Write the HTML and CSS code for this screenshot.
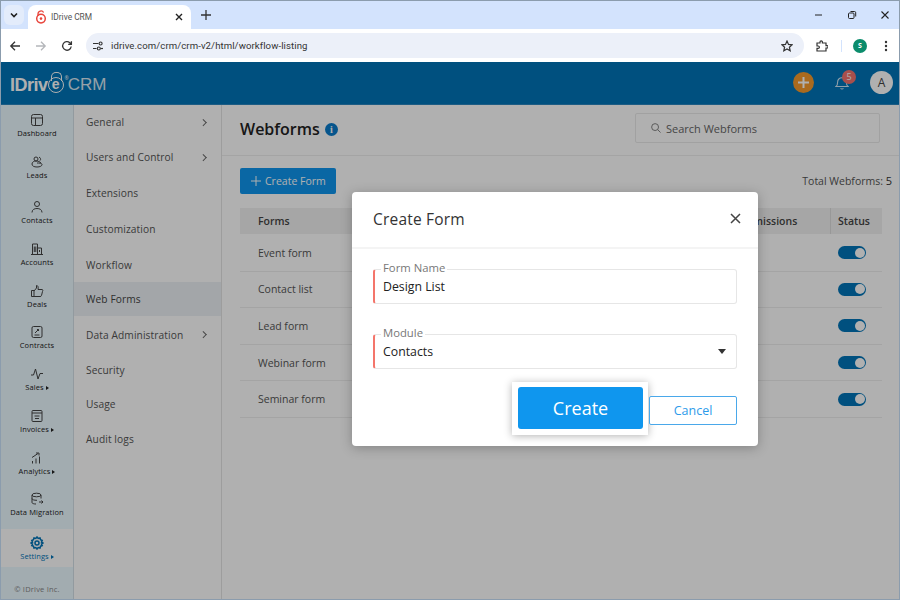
FILE: index.html
```html
<!DOCTYPE html>
<html lang="en">
<head>
    <meta charset="UTF-8">
    <meta name="viewport" content="width=device-width, initial-scale=1.0">
    <title>IDrive CRM</title>
    <link rel="stylesheet" href="styles.css">
</head>
<body>
    <div class="window">
        <!-- Browser chrome -->
        <div class="tabstrip">
            <button class="tab-list"><svg width="10" height="10" viewBox="0 0 10 10"><path d="M2 3.5 5 6.5 8 3.5" fill="none" stroke="#1f1f1f" stroke-width="1.6"/></svg></button>
            <div class="tab">
                <svg class="favicon" width="12" height="14" viewBox="0 0 12 14"><path d="M3 6V4a3 3 0 0 1 5.6-1.5" fill="none" stroke="#e8453c" stroke-width="1.3"/><circle cx="6" cy="8.6" r="4.3" fill="none" stroke="#e8453c" stroke-width="1.5"/><circle cx="6" cy="8.6" r="1.3" fill="#e8453c"/></svg>
                <span class="tab-title">IDrive CRM</span>
                <svg class="tab-close" width="8" height="8" viewBox="0 0 8 8"><path d="M1 1 7 7M7 1 1 7" stroke="#222" stroke-width="1.4"/></svg>
            </div>
            <svg class="new-tab" width="10" height="10" viewBox="0 0 10 10"><path d="M5 0V10M0 5H10" stroke="#333" stroke-width="1.3"/></svg>
            <div class="window-controls">
                <svg width="10" height="10" viewBox="0 0 10 10"><path d="M1 5H8" stroke="#222" stroke-width="1"/></svg>
                <svg width="10" height="10" viewBox="0 0 10 10"><rect x="1.5" y="3" width="5.5" height="5.5" rx="1" fill="none" stroke="#222"/><path d="M3.5 1.5H7.5A1.2 1.2 0 0 1 8.7 2.7V6.5" fill="none" stroke="#222"/></svg>
                <svg width="10" height="10" viewBox="0 0 10 10"><path d="M1.5 1.5 8.5 8.5M8.5 1.5 1.5 8.5" stroke="#222" stroke-width="1.1"/></svg>
            </div>
        </div>
        <div class="navbar">
            <div class="nav-buttons">
                <svg width="12" height="12" viewBox="0 0 12 12"><path d="M11 6H2M6 1.8 1.8 6 6 10.2" fill="none" stroke="#333" stroke-width="1.3"/></svg>
                <svg width="12" height="12" viewBox="0 0 12 12"><path d="M1 6H10M6 1.8 10.2 6 6 10.2" fill="none" stroke="#b4b6ba" stroke-width="1.3"/></svg>
                <svg width="12" height="12" viewBox="0 0 12 12"><path d="M10.2 6.5A4.3 4.3 0 1 1 8.8 2.7L10.4 4.2M10.4 1.2V4.4H7.2" fill="none" stroke="#333" stroke-width="1.3"/></svg>
            </div>
            <div class="omnibox">
                <span class="site-icon"><svg width="10" height="10" viewBox="0 0 10 10"><path d="M0 2.5H5.5M0 7.5H3.5" stroke="#333" stroke-width="1.2"/><circle cx="7.6" cy="2.5" r="1.5" fill="none" stroke="#333" stroke-width="1.1"/><circle cx="5.8" cy="7.5" r="1.5" fill="none" stroke="#333" stroke-width="1.1"/><path d="M7.5 7.5H10" stroke="#333" stroke-width="1.2"/></svg></span>
                <span class="url">idrive.com/crm/crm-v2/html/workflow-listing</span>
                <svg class="star" width="12" height="12" viewBox="0 0 12 12"><path d="M6 1 7.5 4.4 11.1 4.8 8.4 7.2 9.2 10.8 6 9 2.8 10.8 3.6 7.2.9 4.8 4.5 4.4Z" fill="none" stroke="#333" stroke-width="1.2"/></svg>
            </div>
            <svg class="puzzle" width="12" height="12" viewBox="0 0 12 12"><path d="M1 3H4V2a1.2 1.2 0 0 1 2.4 0V3H10V5.6H11a1.2 1.2 0 0 1 0 2.4H10V11H1V8.4H2.2a1.2 1.2 0 0 0 0-2.4H1Z" fill="none" stroke="#333" stroke-width="1.2"/></svg>
            <span class="nav-sep"></span>
            <span class="profile">S</span>
            <svg class="kebab" width="4" height="12" viewBox="0 0 4 12"><circle cx="2" cy="2" r="1.2" fill="#333"/><circle cx="2" cy="6" r="1.2" fill="#333"/><circle cx="2" cy="10" r="1.2" fill="#333"/></svg>
        </div>

        <!-- CRM app, dimmed by the modal overlay -->
        <div class="app">
            <header class="app-header">
                <div class="logo">
                    <span class="logo-name">IDriv</span><span class="logo-e">e</span><span class="logo-reg">®</span>
                    <span class="logo-crm">CRM</span>
                </div>
                <div class="header-actions">
                    <span class="add-btn"><svg width="13" height="13" viewBox="0 0 13 13"><path d="M6.5 1V12M1 6.5H12" stroke="#fff" stroke-width="2"/></svg></span>
                    <span class="bell">
                        <svg width="14" height="15" viewBox="0 0 14 15"><path d="M1 11.5C2.5 10.5 2.6 9 2.6 7.2 2.6 4.5 4.4 2.8 7 2.8S11.4 4.5 11.4 7.2C11.4 9 11.5 10.5 13 11.5ZM5.6 13.2A1.6 1.6 0 0 0 8.4 13.2" fill="none" stroke="#cfe6f5" stroke-width="1.1"/></svg>
                        <span class="bell-count">5</span>
                    </span>
                    <span class="user-avatar">A</span>
                </div>
            </header>
            <div class="app-body">
                <nav class="sidebar">
                    <a class="side-item"><svg viewBox="0 0 14 14"><rect x="1.5" y="1.5" width="11" height="11" rx="2"/><path d="M1.5 5H12.5M5.5 5V12.5"/></svg>Dashboard</a>
                    <a class="side-item"><svg viewBox="0 0 14 14"><circle cx="6" cy="4" r="2"/><path d="M9 2.2a2 2 0 0 1 1 3.4M2 9c0-2 2-3 4-3s4 .8 5 2M2 9c0 2 2 3 5 3s5-1 5-2.500-3-1.500-5-1.500"/></svg>Leads</a>
                    <a class="side-item side-item-gap"><svg viewBox="0 0 14 14"><circle cx="7" cy="4" r="2.500"/><path d="M2 12.500C2 9.500 4.500 8.500 7 8.500S12 9.500 12 12.500"/></svg>Contacts</a>
                    <a class="side-item"><svg viewBox="0 0 14 14"><path d="M1 12.500H13M2.500 12.500V2H7.500V12.500M7.500 6H11.500V12.500M4.300 4.500V10M5.800 4.500V10M9.500 8V10"/></svg>Accounts</a>
                    <a class="side-item"><svg viewBox="0 0 14 14"><path d="M1.500 6.500H4V12.500H1.500ZM4 7 6.500 4V1.500C8 1.500 8.500 3 8 5.500H12C13 5.500 13 6.500 12.500 7.500L11.500 11.500C11.300 12.300 10.800 12.500 10 12.500H4"/></svg>Deals</a>
                    <a class="side-item"><svg viewBox="0 0 14 14"><rect x="2" y="1.500" width="10" height="11" rx="1.500"/><path d="M4.500 10H9.500M5 8 8.500 4.500M7 4.500H8.500V6" /></svg>Contracts</a>
                    <a class="side-item"><svg viewBox="0 0 14 14"><path d="M1 8 3.500 8 5.500 2 8 12 10 6.500 13 6.500"/></svg><span>Sales<i class="caret"></i></span></a>
                    <a class="side-item"><svg viewBox="0 0 14 14"><rect x="2" y="1.500" width="10" height="11" rx="1"/><path d="M2 4H12M4.500 7H9.500M5 9.500H9"/></svg><span>Invoices<i class="caret"></i></span></a>
                    <a class="side-item"><svg viewBox="0 0 14 14"><path d="M2.500 12.500V10M6 12.500V7.500M9.500 12.500V5.500M2 6.500 8 2.500M6 2H9V4.500"/></svg><span>Analytics<i class="caret"></i></span></a>
                    <a class="side-item"><svg viewBox="0 0 14 14"><ellipse cx="6.500" cy="3" rx="4.500" ry="1.800"/><path d="M2 3V10.500C2 11.500 4 12 6 12M11 3V6.500M2 6.500C2 7.700 4 8.300 7 8.300M9 10H13M11.500 8.500 13 10 11.500 11.500"/></svg>Data Migration</a>
                    <a class="side-item side-item-active"><svg viewBox="0 0 14 14"><circle cx="7" cy="7" r="2"/><path d="M7 1 8.200 2.500 10 2 10.500 3.800 12.200 4.500 11.500 6.200 13 7 11.500 8 12.200 9.600 10.500 10.200 10 12 8.200 11.500 7 13 5.800 11.500 4 12 3.500 10.200 1.800 9.600 2.500 8 1 7 2.500 6.200 1.800 4.500 3.500 3.800 4 2 5.800 2.500Z"/></svg><span>Settings<i class="caret"></i></span></a>
                    <div class="copyright">© IDrive Inc.</div>
                </nav>
                <aside class="settings-menu">
                    <a class="menu-item menu-item-short">General<i class="chev"></i></a>
                    <a class="menu-item menu-item-tall">Users and Control<i class="chev"></i></a>
                    <a class="menu-item menu-item-tall">Extensions</a>
                    <a class="menu-item menu-item-tall">Customization</a>
                    <a class="menu-item">Workflow</a>
                    <a class="menu-item menu-item-active">Web Forms</a>
                    <a class="menu-item menu-item-data">Data Administration<i class="chev"></i></a>
                    <a class="menu-item menu-item-short">Security</a>
                    <a class="menu-item menu-item-short">Usage</a>
                    <a class="menu-item">Audit logs</a>
                </aside>
                <main class="content">
                    <div class="page-head">
                        <h1>Webforms</h1>
                        <span class="info-icon">i</span>
                        <div class="search">
                            <svg width="10" height="10" viewBox="0 0 11 11"><circle cx="4.500" cy="4.500" r="3.800" fill="none" stroke="#777" stroke-width="1"/><path d="M7.300 7.300 10.500 10.500" stroke="#777" stroke-width="1"/></svg>
                            <span>Search Webforms</span>
                        </div>
                    </div>
                    <div class="list-tools">
                        <button class="create-form-btn"><svg width="10" height="10" viewBox="0 0 10 10"><path d="M5 0V10M0 5H10" stroke="#fff" stroke-width="1"/></svg>Create Form</button>
                        <div class="total">Total Webforms: <b>5</b></div>
                    </div>
                    <div class="table">
                        <div class="table-row table-head">
                            <div class="cell-form">Forms</div>
                            <div class="cell-subs">Submissions</div>
                            <div class="cell-status">Status</div>
                        </div>
                        <div class="table-row">
                            <div class="cell-form">Event form</div><div class="cell-subs"></div>
                            <div class="cell-status"><span class="toggle"></span></div>
                        </div>
                        <div class="table-row">
                            <div class="cell-form">Contact list</div><div class="cell-subs"></div>
                            <div class="cell-status"><span class="toggle"></span></div>
                        </div>
                        <div class="table-row">
                            <div class="cell-form">Lead form</div><div class="cell-subs"></div>
                            <div class="cell-status"><span class="toggle"></span></div>
                        </div>
                        <div class="table-row">
                            <div class="cell-form">Webinar form</div><div class="cell-subs"></div>
                            <div class="cell-status"><span class="toggle"></span></div>
                        </div>
                        <div class="table-row">
                            <div class="cell-form">Seminar form</div><div class="cell-subs"></div>
                            <div class="cell-status"><span class="toggle"></span></div>
                        </div>
                    </div>
                </main>
            </div>

            <div class="overlay"></div>
            <div class="modal">
                <div class="modal-head">
                    <h2>Create Form</h2>
                    <svg width="11" height="11" viewBox="0 0 11 11"><path d="M1 1 10 10M10 1 1 10" stroke="#444" stroke-width="1.500"/></svg>
                </div>
                <div class="modal-body">
                    <div class="field">
                        <label>Form Name</label>
                        <span class="field-value">Design List</span>
                    </div>
                    <div class="field">
                        <label>Module</label>
                        <span class="field-value">Contacts</span>
                        <i class="select-arrow"></i>
                    </div>
                    <div class="modal-actions">
                        <div class="create-highlight"><button class="create-btn">Create</button></div>
                        <button class="cancel-btn">Cancel</button>
                    </div>
                </div>
            </div>
        </div>
    </div>
</body>
</html>
```

FILE: styles.css
```css
* {
    margin: 0;
    padding: 0;
    box-sizing: border-box;
}

body {
    font-family: 'Open Sans', sans-serif;
    background: #fff;
    overflow: hidden;
}

button {
    font-family: 'Open Sans', sans-serif;
    border: none;
}

.window {
    display: flex;
    flex-direction: column;
    width: 900px;
    height: 600px;
    border: 1px solid #8b9cad;
    overflow: hidden;
}

/* browser chrome */
.tabstrip {
    display: flex;
    align-items: flex-end;
    height: 28px;
    flex: none;
    background: #d3e3fd;
    padding-left: 3px;
}

.tab-list {
    display: flex;
    align-items: center;
    justify-content: center;
    width: 20px;
    height: 20px;
    margin-bottom: 4px;
    background: #e3ecfb;
    border-radius: 6px;
}

.tab {
    display: flex;
    align-items: center;
    width: 163px;
    height: 24px;
    margin-left: 4px;
    padding: 0 8px 0 7px;
    background: #fff;
    border-radius: 8px 8px 0 0;
}

.tab-title {
    flex: 1;
    margin-left: 4px;
    font-family: 'Roboto', sans-serif;
    font-size: 8.400px;
    color: #555;
}

.new-tab {
    margin: 0 0 9px 10px;
}

.window-controls {
    display: flex;
    gap: 23px;
    margin: 0 9px 9px auto;
}

.navbar {
    display: flex;
    align-items: center;
    height: 33px;
    flex: none;
    background: #fff;
}

.nav-buttons {
    display: flex;
    gap: 14px;
    margin-left: 8px;
}

.omnibox {
    display: flex;
    align-items: center;
    width: 718px;
    height: 25px;
    margin-left: 13px;
    padding-right: 11px;
    background: #ecf0f9;
    border-radius: 13px;
}

.site-icon {
    display: flex;
    margin-left: 7px;
}

.url {
    flex: 1;
    margin-left: 8px;
    font-family: 'Roboto', sans-serif;
    font-size: 9.600px;
    letter-spacing: 0.08px;
    color: #333;
}

.puzzle {
    margin-left: 12px;
}

.nav-sep {
    width: 1px;
    height: 12px;
    margin-left: 13px;
    background: #d3e3fd;
}

.profile {
    width: 14px;
    height: 14px;
    margin-left: 11px;
    border-radius: 50%;
    background: #0b8c6c;
    color: #fff;
    font-size: 7px;
    font-weight: 700;
    line-height: 14px;
    text-align: center;
}

.kebab {
    margin-left: 17px;
}

/* crm app */
.app {
    position: relative;
    flex: 1;
    display: flex;
    flex-direction: column;
    min-height: 0;
}

.app-header {
    display: flex;
    align-items: center;
    justify-content: space-between;
    height: 43px;
    flex: none;
    padding: 0 6px 1px 9px;
    background: #0074b8;
    border-bottom: 1px solid #2a86bf;
}

.logo {
    display: flex;
    align-items: center;
    padding-top: 5px;
    color: #fff;
}

.logo-name {
    font-family: 'Liberation Sans', sans-serif;
    font-size: 18px;
    font-weight: 700;
    letter-spacing: -0.5px;
}

.logo-e {
    position: relative;
    width: 16px;
    height: 16px;
    border: 1.500px solid #fff;
    border-radius: 50%;
    font-family: 'Liberation Sans', sans-serif;
    font-size: 14px;
    font-weight: 700;
    line-height: 12px;
    text-align: center;
}

.logo-e::before {
    content: "";
    position: absolute;
    top: -6px;
    left: 2px;
    width: 9px;
    height: 8px;
    border: 1.500px solid #fff;
    border-bottom: none;
    border-radius: 5px 5px 0 0;
}

.logo-reg {
    align-self: flex-start;
    font-size: 5px;
    margin-left: 1px;
}

.logo-crm {
    margin-left: -1px;
    font-family: 'Liberation Sans', sans-serif;
    font-size: 17px;
    opacity: 0.85;
}

.header-actions {
    display: flex;
    align-items: center;
}

.add-btn {
    display: flex;
    align-items: center;
    justify-content: center;
    width: 21px;
    height: 21px;
    border-radius: 50%;
    background: #f59a2c;
}

.bell {
    position: relative;
    display: flex;
    margin-left: 21px;
}

.bell-count {
    position: absolute;
    top: -5px;
    left: 7px;
    width: 14px;
    height: 14px;
    border-radius: 50%;
    background: #f4736e;
    color: #fff;
    font-size: 9px;
    line-height: 14px;
    text-align: center;
}

.user-avatar {
    width: 23px;
    height: 23px;
    margin-left: 21px;
    border-radius: 50%;
    background: #fff;
    color: #444;
    font-size: 12px;
    line-height: 23px;
    text-align: center;
}

.app-body {
    flex: 1;
    display: flex;
    min-height: 0;
}

.sidebar {
    display: flex;
    flex-direction: column;
    align-items: center;
    width: 73px;
    flex: none;
    padding-top: 8px;
    background: #ebf9ff;
    border-right: 1px solid #d4e0e6;
}

.side-item {
    display: flex;
    flex-direction: column;
    align-items: center;
    width: 100%;
    height: 41.700px;
    font-size: 7.500px;
    letter-spacing: 0.1px;
    color: #222;
    white-space: nowrap;
}

.side-item svg {
    width: 14px;
    height: 14px;
    margin-bottom: 1px;
    flex: none;
    fill: none;
    stroke: #444;
    stroke-width: 1;
}

.side-item-gap {
    margin-top: 4px;
}

.side-item-active {
    height: 38px;
    margin-top: -5px;
    padding-top: 7px;
    background: #fff;
    color: #0074b8;
}

.side-item-active svg {
    stroke: #0074b8;
    stroke-width: 1.500;
}

.caret {
    display: inline-block;
    margin-left: 2px;
    border-left: 3px solid currentColor;
    border-top: 2px solid transparent;
    border-bottom: 2px solid transparent;
}

.copyright {
    margin-top: auto;
    margin-bottom: 5px;
    font-size: 7.500px;
    color: #888;
    letter-spacing: 0.2px;
}

.settings-menu {
    display: flex;
    flex-direction: column;
    width: 148px;
    flex: none;
    background: #fff;
    border-right: 1px solid #e4e4e4;
}

.menu-item {
    display: flex;
    align-items: center;
    justify-content: space-between;
    height: 35px;
    padding: 0 16px 0 12px;
    font-size: 10.200px;
    letter-spacing: 0.1px;
    color: #555;
}

.menu-item-tall {
    height: 36px;
}

.menu-item-short {
    height: 34px;
}

.menu-item-data {
    height: 37px;
}

.menu-item-active {
    height: 34px;
    background: #ecf1f5;
    color: #444;
}

.chev {
    width: 4.500px;
    height: 4.500px;
    border-top: 1px solid #666;
    border-right: 1px solid #666;
    transform: rotate(45deg);
}

.content {
    flex: 1;
    min-width: 0;
    background: #fff;
}

.page-head {
    display: flex;
    align-items: center;
    height: 51px;
    padding: 0 19px 2px 18px;
    border-bottom: 1px solid #eee;
}

.page-head h1 {
    font-size: 16px;
    font-weight: 600;
    color: #222;
}

.info-icon {
    width: 13px;
    height: 13px;
    margin-left: 5px;
    border-radius: 50%;
    background: #0a7ccb;
    color: #fff;
    font-family: 'Liberation Serif', serif;
    font-size: 10px;
    font-weight: 700;
    line-height: 13px;
    text-align: center;
}

.search {
    display: flex;
    align-items: center;
    gap: 5px;
    width: 245px;
    height: 30px;
    margin: -2px 0 0 auto;
    padding-left: 15px;
    border: 1px solid #eaeaea;
    border-radius: 2px;
    font-size: 11px;
    color: #666;
}

.list-tools {
    display: flex;
    align-items: center;
    justify-content: space-between;
    height: 26px;
    margin: 12px 7px 14px 18px;
}

.create-form-btn {
    display: flex;
    align-items: center;
    gap: 4px;
    width: 96px;
    height: 26px;
    padding-left: 11px;
    background: #0f96ee;
    border-radius: 2px;
    color: #fff;
    font-size: 10.500px;
}

.total {
    margin-top: -2px;
    font-size: 10.500px;
    color: #555;
}

.total b {
    font-size: 11px;
    font-weight: 400;
    color: #333;
}

.table {
    width: 642px;
    margin-left: 18px;
}

.table-row {
    display: flex;
    align-items: center;
    height: 36.600px;
    border-bottom: 1px solid #eee;
    font-size: 10.500px;
    color: #555;
}

.table-head {
    height: 26px;
    margin-bottom: 1px;
    background: #f1f1f1;
    border-bottom: none;
    font-weight: 600;
    color: #444;
}

.cell-form {
    flex: 1;
    padding-left: 18px;
}

.cell-subs {
    width: 96px;
}

.cell-status {
    display: flex;
    align-items: center;
    width: 52px;
    height: 100%;
    padding-left: 8px;
}

.table-head .cell-status {
    height: 26px;
    padding-left: 7px;
    border-left: 1px solid #ddd;
}

.toggle {
    position: relative;
    width: 28px;
    height: 13px;
    border-radius: 7px;
    background: #0074b8;
}

.toggle::after {
    content: "";
    position: absolute;
    top: 1.500px;
    right: 1.500px;
    width: 10px;
    height: 10px;
    border-radius: 50%;
    background: #fff;
}

/* modal */
.overlay {
    position: absolute;
    inset: 0;
    background: rgba(0, 0, 0, 0.31);
}

.modal {
    position: absolute;
    top: 130px;
    left: 351px;
    width: 406px;
    height: 254px;
    background: #fff;
    border-radius: 4px;
    box-shadow: 0 2px 12px rgba(0, 0, 0, 0.25);
}

.modal-head {
    display: flex;
    align-items: center;
    justify-content: space-between;
    height: 57px;
    padding: 0 17px 2px 21px;
    border-bottom: 2px solid #f4f4f4;
}

.modal-head h2 {
    font-size: 15.500px;
    font-weight: 400;
    letter-spacing: 0.2px;
    color: #333;
}

.modal-body {
    padding: 20px 21px 0;
}

.field {
    position: relative;
    display: flex;
    align-items: center;
    height: 35px;
    margin-bottom: 30px;
    padding: 0 10px 0 8px;
    border: 1px solid #e6e6e6;
    border-left: 2px solid #f4756b;
    border-radius: 3px;
}

.field label {
    position: absolute;
    top: -9px;
    left: 6px;
    padding: 0 2px;
    background: #fff;
    font-size: 11.300px;
    line-height: 14px;
    color: #777;
}

.field-value {
    margin-top: -1px;
    font-size: 12.300px;
    color: #222;
}

.select-arrow {
    margin-left: auto;
    border-top: 5px solid #333;
    border-left: 4.500px solid transparent;
    border-right: 4.500px solid transparent;
}

.modal-actions {
    display: flex;
    align-items: center;
    justify-content: flex-end;
    margin-top: -17px;
}

.create-highlight {
    padding: 5px 5px 6px 6px;
    background: #fff;
    box-shadow: 0 1px 8px rgba(0, 0, 0, 0.3);
}

.create-btn {
    display: block;
    width: 125px;
    height: 42px;
    background: #0f96ee;
    border-radius: 3px;
    color: #fff;
    font-size: 18px;
}

.cancel-btn {
    width: 88px;
    height: 29px;
    margin-left: 1px;
    margin-top: 4px;
    background: #fff;
    border: 1px solid #4aa8ea;
    border-radius: 2px;
    color: #2d9bea;
    font-size: 12.500px;
}
```
